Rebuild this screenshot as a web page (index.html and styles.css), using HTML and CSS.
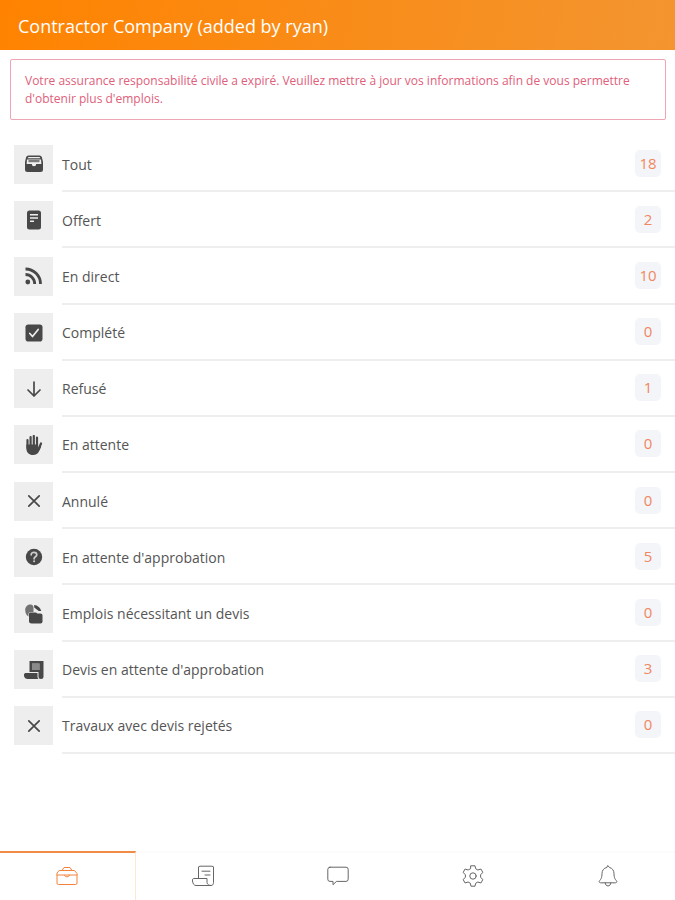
FILE: index.html
```html
<!DOCTYPE html>
<html lang="fr">
  <head>
    <meta charset="UTF-8" />
    <meta name="viewport" content="width=device-width, initial-scale=1.0" />
    <title>Contractor Company</title>
    <link rel="stylesheet" href="styles.css">
  </head>
  <body>
    <header class="header">
      <h1>Contractor Company (added by ryan)</h1>
    </header>
    <p class="alert" role="alert">
      Votre assurance responsabilité civile a expiré. Veuillez mettre à jour vos informations afin de vous permettre d'obtenir plus d'emplois.
    </p>
    <main class="list">
      <a class="row" href="#tout">
        <span class="tile">
          <svg viewBox="0 0 20 20">
            <path fill-rule="evenodd" d="M4.500 1.500h11a2.500 2.500 0 0 1 2.400 1.800L19 8v7.500a2.500 2.500 0 0 1-2.500 2.500h-13A2.500 2.500 0 0 1 1 15.500V8l1.100-4.700A2.500 2.500 0 0 1 4.500 1.500zM4.500 3L3.500 4.200h13L15.500 3zM3 5.400L2.600 10h5.200a2.200 2.200 0 0 0 4.400 0h5.200L17 5.400z" />
            <path opacity=".7" d="M4.500 6h11v2.200h-11z" />
          </svg>
        </span>
        <span class="line"><span class="label">Tout</span><span class="count">18</span></span>
      </a>
      <a class="row" href="#offert">
        <span class="tile">
          <svg viewBox="0 0 20 20">
            <path fill-rule="evenodd" d="M5.500.5h9A2.500 2.500 0 0 1 17 3v14a2.500 2.500 0 0 1-2.500 2.500h-9A2.500 2.500 0 0 1 3 17V3A2.500 2.500 0 0 1 5.500.5zM6 4v1.400h8V4zM6 7.300v1.400h8V7.300zM6 10.600V12h4v-1.400z" />
          </svg>
        </span>
        <span class="line"><span class="label">Offert</span><span class="count">2</span></span>
      </a>
      <a class="row" href="#en-direct">
        <span class="tile">
          <svg viewBox="0 0 20 20">
            <circle cx="3.800" cy="16" r="2.400" />
            <path class="stroke thick" d="M1.500 8.500c5 0 9.200 4.200 9.200 9.500M1.500 3c8.200 0 15 6.600 15 15" />
          </svg>
        </span>
        <span class="line"><span class="label">En direct</span><span class="count">10</span></span>
      </a>
      <a class="row" href="#complete">
        <span class="tile">
          <svg viewBox="0 0 20 20">
            <rect x="1.500" y="1.500" width="17" height="17" rx="2.800" />
            <path class="stroke light" d="M5.800 10.500l2.700 3 5.700-7" />
          </svg>
        </span>
        <span class="line"><span class="label">Complété</span><span class="count">0</span></span>
      </a>
      <a class="row" href="#refuse">
        <span class="tile">
          <svg viewBox="0 0 20 20">
            <path class="stroke" d="M10 3v14M4 11l6 6 6-6" />
          </svg>
        </span>
        <span class="line"><span class="label">Refusé</span><span class="count">1</span></span>
      </a>
      <a class="row" href="#en-attente">
        <span class="tile">
          <svg viewBox="0 0 20 20">
            <path class="stroke finger" d="M3.500 5v8M6.600 2v9M9.800 1v10M13 2.500V12M17 8.500l-2.500 6" />
            <path d="M2.400 9.500h11.700v4l1.700-2.200 1.400.5-2.200 4.500C13.900 18.800 12 20 9 20c-4 0-6.600-2.500-6.600-6.500z" />
          </svg>
        </span>
        <span class="line"><span class="label">En attente</span><span class="count">0</span></span>
      </a>
      <a class="row" href="#annule">
        <span class="tile">
          <svg viewBox="0 0 20 20">
            <path class="stroke" d="M4.800 4.800l10.400 10.400M15.200 4.800L4.800 15.200" />
          </svg>
        </span>
        <span class="line"><span class="label">Annulé</span><span class="count">0</span></span>
      </a>
      <a class="row" href="#en-attente-approbation">
        <span class="tile">
          <svg viewBox="0 0 20 20">
            <circle cx="10" cy="10" r="8.200" />
            <path class="stroke mark" d="M7.200 7.800c0-3.400 5.600-3.200 5.600 0 0 2-2.700 2-2.700 4" />
            <circle class="dot" cx="10.100" cy="14.300" r="1" />
          </svg>
        </span>
        <span class="line"><span class="label">En attente d'approbation</span><span class="count">5</span></span>
      </a>
      <a class="row" href="#emplois-devis">
        <span class="tile">
          <svg viewBox="0 0 20 20">
            <path opacity=".75" d="M6.500.5c2 0 3 1.500 3 3.500v4H6.500C5.200 8 4.500 9 4.500 10v2.500C2.500 11.500 1.200 9 1.200 6 1.200 2.500 3.800.5 6.500.5z" />
            <path d="M10.200 1c3.500.3 6.300 2.800 7 6h-2.500l-4.500-3.500zM6.500 8.500H12l1.300 1h3.200c1.200 0 2 .8 2 2v6c0 1.200-.8 2-2 2h-9c-1.200 0-2.500-.8-2.500-2V10c0-1 .5-1.500 1.500-1.500z" />
          </svg>
        </span>
        <span class="line"><span class="label">Emplois nécessitant un devis</span><span class="count">0</span></span>
      </a>
      <a class="row" href="#devis-attente">
        <span class="tile">
          <svg viewBox="0 0 20 20">
            <path fill-rule="evenodd" d="M5.500 1h14v15.500a2.500 2.500 0 0 1-5 0V12h-9zM8 3.500V10h7.500V3.500z" />
            <path opacity=".6" d="M8 3.500h7.500V10H8z" />
            <path d="M2 13h11.500v3.500a3 3 0 0 0 1 2.500H3.500C1.500 19-.5 17 0 14.500.2 13.500 1 13 2 13z" />
          </svg>
        </span>
        <span class="line"><span class="label">Devis en attente d'approbation</span><span class="count">3</span></span>
      </a>
      <a class="row" href="#devis-rejetes">
        <span class="tile">
          <svg viewBox="0 0 20 20">
            <path class="stroke" d="M4.800 4.800l10.400 10.400M15.200 4.800L4.800 15.200" />
          </svg>
        </span>
        <span class="line"><span class="label">Travaux avec devis rejetés</span><span class="count">0</span></span>
      </a>
    </main>
    <nav class="tabs">
      <a class="tab active" href="#travaux" aria-label="Travaux">
        <svg viewBox="0 0 24 24">
          <path d="M4.500 6.500h15L22 9.500V19a1.500 1.500 0 0 1-1.500 1.500h-17A1.500 1.500 0 0 1 2 19V9.500zM7 6.500l2-3h6l2 3M2 11h20M9.500 11.200c0 2.200 5 2.200 5 0" />
        </svg>
      </a>
      <a class="tab" href="#devis" aria-label="Devis">
        <svg viewBox="0 0 24 24">
          <path d="M7.500 14.500V2.800l1.500-.6h12l1.500.6v15.700c0 2-1 3-2.500 3S16 20.500 16 18.500v-4H3c-1.300 0-1.800 1-1.500 2.500.4 2.800 1.500 4.500 3.500 4.500h14.500M11 7.200h8M14 11h5" />
        </svg>
      </a>
      <a class="tab" href="#messages" aria-label="Messages">
        <svg viewBox="0 0 24 24">
          <path d="M4 3.200h16A2.200 2.200 0 0 1 22.200 5.400v9.800a2.200 2.200 0 0 1-2.200 2.200H10.500L7 20.700v-3.300H4a2.200 2.200 0 0 1-2.200-2.200V5.400A2.200 2.200 0 0 1 4 3.200z" />
        </svg>
      </a>
      <a class="tab" href="#reglages" aria-label="Réglages">
        <svg viewBox="0 0 24 24">
          <circle cx="12" cy="12" r="3.200" />
          <path d="M10 1.800h4l.7 3 2.200 1.200 3-1 2 3.500-2.300 2.100v2.800l2.300 2.100-2 3.500-3-1-2.200 1.200-.7 3h-4l-.7-3L7.100 18l-3 1-2-3.500 2.300-2.100v-2.800L2.100 8.500l2-3.500 3 1 2.200-1.200z" />
        </svg>
      </a>
      <a class="tab" href="#notifications" aria-label="Notifications">
        <svg viewBox="0 0 24 24">
          <path d="M12 1.800l1.500 1.700c3 .8 4.400 3 4.500 6 .1 4.500 1 5.600 2.500 7.300.8 1 .2 2-1 2h-15c-1.200 0-1.800-1-1-2C5 15.100 5.900 14 6 9.500c.1-3 1.500-5.200 4.500-6zM9.200 19c0 4 5.600 4 5.600 0" />
        </svg>
      </a>
    </nav>
  </body>
</html>
```

FILE: styles.css
```css
* {
  box-sizing: border-box;
}
body {
  display: flex;
  flex-direction: column;
  min-height: 100vh;
  margin: 0;
  font-family: "Open Sans", "Noto Sans", sans-serif;
  background-color: #fff;
  color: #555;
}
a {
  color: inherit;
  text-decoration: none;
}
.header {
  padding: 14px 18px 12px;
  background: linear-gradient(100deg, #ff8300, #f39530);
  color: #fff;
}
.header h1 {
  margin: 0;
  font-size: 18px;
  line-height: 24px;
  font-weight: 500;
}
.alert {
  margin: 9px 9px 16px 10px;
  padding: 12px 14px 11px;
  border: 1px solid #f0a5b5;
  border-radius: 2px;
  color: #e0607a;
  font-size: 12px;
  line-height: 18px;
}

/* job categories */
.list {
  flex: 1;
  display: grid;
  grid-auto-rows: 1fr;
  padding-bottom: 97px;
}
.row {
  display: flex;
  align-items: stretch;
  gap: 9px;
  padding-left: 14px;
}
.tile {
  display: flex;
  align-items: center;
  justify-content: center;
  align-self: center;
  width: 39px;
  height: 39px;
  background-color: #eee;
}
.tile svg {
  width: 20px;
  height: 20px;
  fill: #484848;
}
.line {
  flex: 1;
  display: flex;
  align-items: center;
  justify-content: space-between;
  padding-right: 14px;
  border-bottom: 2px solid #eee;
}
.label {
  padding-top: 2px;
  font-size: 14px;
}
.count {
  min-width: 26px;
  padding: 0 4px;
  border-radius: 5px;
  background-color: #f4f5f8;
  color: #f0875f;
  font-size: 15px;
  line-height: 27px;
  text-align: center;
}
.tile .stroke {
  fill: none;
  stroke: #484848;
  stroke-width: 1.700;
  stroke-linecap: round;
  stroke-linejoin: round;
}
.tile .thick {
  stroke-width: 2.800;
  stroke-linecap: butt;
}
.tile .finger {
  stroke-width: 2.200;
}
.tile .light {
  stroke: #eee;
}
.tile .mark {
  stroke: #ccc;
}
.tile .dot {
  fill: #ccc;
}

/* bottom tabs */
.tabs {
  display: flex;
  height: 49px;
}
.tab {
  flex: 1;
  display: flex;
  align-items: center;
  justify-content: center;
  padding-bottom: 2px;
  border-top: 2px solid #fcfcfc;
  color: #666;
}
.tab svg {
  width: 24px;
  height: 24px;
  fill: none;
  stroke: currentColor;
  stroke-linejoin: round;
  stroke-linecap: round;
}
.tab.active {
  border-top-color: #f08c46;
  border-right: 1px solid #fde8d0;
  color: #f5823c;
}
```
